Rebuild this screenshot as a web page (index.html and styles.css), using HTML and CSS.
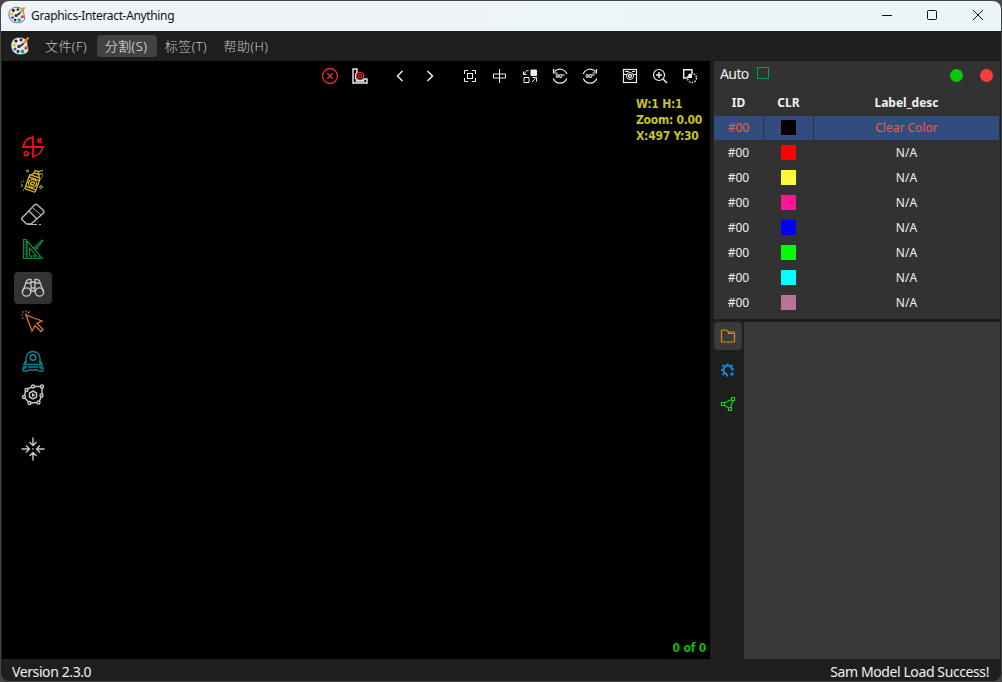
FILE: index.html
```html
<!DOCTYPE html>
<html lang="zh-CN">
<head>
<meta charset="utf-8">
<title>Graphics-Interact-Anything</title>
<link rel="stylesheet" href="styles.css">
</head>
<body>
<svg class="defs" width="0" height="0">
  <symbol id="palette" viewBox="0 0 20 20">
    <path d="M10 1.500C5 1 1 4.500 1 9.500 1 15 5 19 10.500 18.500c3 0 8-1 8-5 0-2-1-3-1-5C18 4 14 1.500 10 1.500z" fill="#e8e8e8" stroke="#444" stroke-width=".8"/>
    <circle cx="6" cy="5" r="1.600" fill="#222"/><circle cx="11" cy="4" r="1.400" fill="#222"/>
    <circle cx="4.500" cy="9" r="1.500" fill="#e4bf27"/><circle cx="5" cy="13" r="1.500" fill="#2b55bd"/>
    <circle cx="9" cy="10.500" r="1.700" fill="#333"/><circle cx="8" cy="15.500" r="1.400" fill="#222"/>
    <circle cx="12.500" cy="15.500" r="1.900" fill="#13a2a0"/><circle cx="16" cy="12" r="1.700" fill="#c7443e"/>
    <path d="M18.500 1.500l-5 6" stroke="#e88a19" stroke-width="2.200"/><path d="M13.500 7.500l-3 2.500" stroke="#333" stroke-width="2"/>
  </symbol>
</svg>
<div class="window">
  <header class="titlebar">
    <svg class="app-icon" width="18" height="18"><use href="#palette"/></svg>
    <span class="title">Graphics-Interact-Anything</span>
    <div class="controls">
      <svg viewBox="0 0 46 30"><path d="M17 14.500h10"/></svg>
      <svg viewBox="0 0 46 30"><rect x="16.500" y="9.500" width="9" height="9" rx="1"/></svg>
      <svg viewBox="0 0 46 30"><path d="M16 9l10 10M26 9L16 19"/></svg>
    </div>
  </header>
  <nav class="menubar">
    <svg class="menu-icon" width="20" height="20"><use href="#palette"/></svg>
    <span class="menu"><b>文件(F)</b></span><span class="menu active"><b>分割(S)</b></span><span class="menu"><b>标签(T)</b></span><span class="menu"><b>帮助(H)</b></span>
  </nav>
  <main class="workspace">
    <section class="canvas">
      <div class="toolbar">
        <svg class="red" viewBox="0 0 20 20"><circle cx="10" cy="10" r="7.500" stroke-width="1.300"/><path stroke-width="1.400" d="M7.300 7.300l5.400 5.400m0-5.400l-5.400 5.400"/></svg>
        <svg viewBox="0 0 20 20"><path stroke-width="1.400" d="M3 3h4v3L5.500 9v3.500L8 14l4 .5L14 13h3v4H3zM5.500 15h9"/><g class="red"><circle cx="10" cy="10" r="3.700" stroke-width="1.300"/><circle cx="10" cy="10" r="1.500" stroke-width="1.200"/><path d="M7 7l1.500 1.500M13 7l-1.500 1.500M7 13l1.500-1.500M13 13l-1.500-1.500"/></g></svg>
        <i class="gap"></i>
        <svg viewBox="0 0 20 20"><path stroke-width="1.500" d="M12.500 5l-5 5 5 5"/></svg>
        <svg viewBox="0 0 20 20"><path stroke-width="1.500" d="M7.500 5l5 5-5 5"/></svg>
        <i class="gap"></i>
        <svg viewBox="0 0 20 20"><path d="M4.500 8V4.500H8M12 4.500h3.500V8M15.500 12v3.500H12M8 15.500H4.500V12"/><rect x="7.500" y="7.500" width="5" height="5"/></svg>
        <svg viewBox="0 0 20 20"><path d="M9.500 3v14M3.500 8h12v4h-12z"/></svg>
        <svg viewBox="0 0 20 20"><path fill="#eee" d="M11 4h5.500v5.500H11z"/><path d="M4 11.500h5v5H4zM8.500 4.500H7L4 8M3.500 5.500v3h3M12 16l3.500-3.500M12.500 11.500h4v4"/></svg>
        <svg viewBox="0 0 20 20"><path stroke-width="1.200" d="M4.500 5.500a7.200 7.200 0 0 1 12.200 2.500M3.300 12.500a7.200 7.200 0 0 0 13.400 0M3.500 3v4h4"/><text x="10" y="12">90°</text></svg>
        <svg viewBox="0 0 20 20"><path stroke-width="1.200" d="M15.500 5.500a7.200 7.200 0 0 0-12.200 2.500M3.300 12.500a7.200 7.200 0 0 0 13.400 0M16.500 3v4h-4"/><text x="10" y="12">90°</text></svg>
        <i class="gap"></i>
        <svg viewBox="0 0 20 20"><rect x="3.500" y="3.500" width="13" height="13" stroke-width="1.200"/><path d="M5 5.500h4M12 5.500h3M4 8.500h3M13 8.500h3"/><circle cx="10" cy="10" r="3.500"/><circle cx="10" cy="10" r="1.500" stroke-width="1.300"/></svg>
        <svg viewBox="0 0 20 20"><circle cx="9" cy="9" r="5.500" stroke-width="1.200"/><path d="M13 13l4 4M9 6v6M6 9h6" stroke-width="1.500"/></svg>
        <svg viewBox="0 0 20 20"><path d="M7.500 12H3.700V3.700H12v3.500" stroke-width="1.400"/><path fill="#eee" stroke="none" d="M7.500 12Q7.500 8 12 7.500V12z"/><circle cx="12" cy="12" r="4.500" stroke-width="1.400" stroke-dasharray="1.600 1.200"/></svg>
      </div>
      <div class="canvas-body">
        <aside class="tools">
          <button class="t-red"><svg viewBox="0 0 24 24"><path stroke-width="1.800" d="M12 1v22M1 12h22M2.500 12C3 6 7 3 12 2.700M12 21.300c5-.5 9-4 9.500-9.300"/><path stroke-width="1.800" d="M16.500 3.500l4 4m0-4l-4 4"/><circle cx="5.300" cy="18.700" r="2" stroke-width="1.700"/></svg></button>
          <button class="t-yellow"><svg viewBox="0 0 24 24"><g transform="rotate(20 12 13)"><rect x="6.500" y="7" width="11" height="15" rx="1" stroke-width="1.300"/><path stroke-width="1.300" d="M6.500 9.500h11M6.500 19.500h11M8 7l2-3h5l1.500 3M10 4V1.500h4V4"/><circle cx="12" cy="14.500" r="4" stroke-width="1.300"/><circle cx="12" cy="14.500" r="1.700" stroke-width="1.400"/></g><circle cx="6.500" cy="2" r="1"/><circle cx="20" cy="18" r="1.300"/><circle cx="0.500" cy="16.500" r="1"/><path d="M2 12h1M2 21h1M0 13h1M17 2.500l5-1M18 5h4M20 9h1M21 7h1"/></svg></button>
          <button class="t-eraser"><svg viewBox="0 0 24 24"><path stroke-width="1.400" d="M.5 15.500L13.500 2Q15 .5 16.500 2l6 5.500q1 1.500 0 2.500L10 21H5.500L.5 16zM8 8l8 8"/><path d="M12 5l8 7M7 21.500h9M18 21.500h2"/></svg></button>
          <button class="t-green"><svg viewBox="0 0 24 24"><path stroke-width="1.200" d="M2.500 2.500h3v19h-3zM2.500 5h2M2.500 8h2M2.500 11h2M2.500 14h2M2.500 17h2M6 4l15.500 17.500H6zM8.500 11v8h7zM12 12l9-9 1 1-8 9M15 10l2 2M10 21v-2M14 21v-2M18 21v-2"/></svg></button>
          <button class="selected spaced"><svg viewBox="0 0 24 24"><path stroke-width="1.300" d="M1.500 16L5 6.500q.5-3.500 5-3V7M22.500 16L19 6.500q-.5-3.500-5-3V7M10 6h4v9h-4zM5 7h5M14 7h5M10 12h4"/><circle cx="5.500" cy="16" r="4.200" stroke-width="1.300"/><circle cx="18.500" cy="16" r="4.200" stroke-width="1.300"/></svg></button>
          <button class="t-orange"><svg viewBox="0 0 24 24"><path stroke-width="1.300" d="M5 5l16 6-5 2.500 6 6-2 2-6-6-3 5.500z"/><path stroke-width="1.200" d="M5 .5V2M.5 5H2M8.500 1.500L7 3M1.500 8.500l1-1M1.500 1.500l1 1M5 3.500V5"/></svg></button>
          <button class="spaced t-teal"><svg viewBox="0 0 24 24"><path d="M5 19V9.500a7 7 0 0 1 14 0V19M5 12l-2 3v4M19 12l2 3v4M6 15.500h12M2 22v-3h3M22 22v-3h-3M7 18h10M2 22h5M17 22h5M7 21h10" stroke-width="1.400"/><circle cx="12" cy="8.500" r="2.800" stroke-width="1.500"/></svg></button>
          <button><svg viewBox="0 0 24 24"><path stroke-width="1.400" d="M12 3.500h9v9l-3.500 7-9 .5L3 14l2-7.500z"/><g fill="#000" stroke-width="1.400"><circle cx="12" cy="3.500" r="1.500"/><circle cx="21" cy="3.500" r="1.500"/><circle cx="20.500" cy="12.500" r="1.500"/><circle cx="17.500" cy="19.500" r="1.500"/><circle cx="8.500" cy="20" r="1.500"/><circle cx="3" cy="14" r="1.500"/><circle cx="5.500" cy="7" r="1.500"/></g><path stroke-width="1.500" d="M12 8l3.500 2v4L12 16l-3.500-2v-4z"/><path fill="#c8c8c8" d="M11.500 10.500l2 1.500-2 1.500z"/></svg></button>
          <button class="last"><svg viewBox="0 0 24 24"><path stroke-width="1.400" d="M12 .5V8M8.500 5l3.500 3.500L15.500 5M12 23.500V16M8.500 19l3.500-3.500 3.500 3.500M.5 12H8M5 8.500L8.500 12 5 15.500M23.500 12H16M19 8.500L15.500 12l3.500 3.500M11.300 12h1.400"/></svg></button>
        </aside>
        <div class="info"><div>W:1 H:1</div><div>Zoom: 0.00</div><div>X:497 Y:30</div></div>
        <div class="counter">0 of 0</div>
      </div>
    </section>
    <section class="side">
      <div class="labels">
        <div class="label-head"><span class="auto">Auto</span><i class="check"></i><i class="dot green"></i><i class="dot reddot"></i></div>
        <div class="row head"><span>ID</span><span>CLR</span><span>Label_desc</span></div>
        <div class="row current"><span>#00</span><span><i class="swatch black"></i></span><span>Clear Color</span></div>
        <div class="row"><span>#00</span><span><i class="swatch c-red"></i></span><span>N/A</span></div>
        <div class="row"><span>#00</span><span><i class="swatch c-yellow"></i></span><span>N/A</span></div>
        <div class="row"><span>#00</span><span><i class="swatch c-pink"></i></span><span>N/A</span></div>
        <div class="row"><span>#00</span><span><i class="swatch c-blue"></i></span><span>N/A</span></div>
        <div class="row"><span>#00</span><span><i class="swatch c-green"></i></span><span>N/A</span></div>
        <div class="row"><span>#00</span><span><i class="swatch c-cyan"></i></span><span>N/A</span></div>
        <div class="row"><span>#00</span><span><i class="swatch c-mauve"></i></span><span>N/A</span></div>
      </div>
      <div class="details">
        <div class="tabs">
          <span class="tab open"><svg viewBox="0 0 16 16"><path stroke="#d8940f" stroke-width="1.200" d="M2.500 2h4l2 2h5q1 0 1 1v8q0 1-1 1h-11q-1 0-1-1V3q0-1 1-1zM8.500 4v1.500h5"/></svg></span>
          <span class="tab"><svg viewBox="0 0 16 16"><path stroke="#1684c7" stroke-width="2.200" d="M7 12A4.200 4.200 0 1 1 12 8"/><path stroke="#1684c7" stroke-width="2.200" d="M7.500 3.500v-2M11 4.500L12.500 3M4 4.500L2.500 3M3 8H1M4 11.500L2.500 13M7 12v2.500M12 7.500h2"/><circle cx="12" cy="12" r="1.700" fill="#1684c7" stroke="none"/></svg></span>
          <span class="tab"><svg viewBox="0 0 16 16"><path stroke="#19cf21" stroke-width="1.200" d="M4.500 7l7-3.500M4.500 9.500l4 2.500M13 4.500l-2.500 7M1.500 6.500h3v3h-3zM11.500 1.500h3v3h-3zM8.500 11.500h3v3h-3z"/></svg></span>
        </div>
        <div class="content"></div>
      </div>
    </section>
  </main>
  <footer class="status"><span class="version">Version 2.3.0</span><span class="message">Sam Model Load Success!</span></footer>
</div>
</body>
</html>
```
FILE: styles.css
```css
* { box-sizing: border-box; }
body { margin: 0; padding: 1px; width: 1002px; height: 682px; overflow: hidden; background: #49464a; font: 13px "Noto Sans", "Noto Sans CJK SC", sans-serif; color: #f0f0f0; }
.defs { display: block; height: 0; }
svg { fill: none; stroke: currentColor; }
.window { display: flex; flex-direction: column; height: 680px; background: #1e1e1e; border-radius: 8px; overflow: hidden; }
.titlebar { height: 30px; flex: none; display: flex; align-items: center; padding: 0 0 2px 7px; background: linear-gradient(90deg, #eef4f9, #eaf5f8); color: #111; }
.app-icon { margin-right: 5px; stroke: none; }
.title { font-size: 12px; letter-spacing: -.35px; white-space: nowrap; }
.controls { margin-left: auto; margin-right: -2px; display: flex; }
.controls svg { width: 46px; height: 30px; stroke: #111; margin-top: 2px; }
.menubar { height: 30px; flex: none; display: flex; align-items: center; padding-left: 9px; color: #c6c6c6; }
.menu-icon { margin-right: 7px; stroke: none; }
.menu { width: 60px; height: 22px; line-height: 21px; text-align: center; border-radius: 4px; white-space: nowrap; }
.menu b { display: block; margin-left: -2px; padding-top: 1px; font-weight: 300; letter-spacing: .45px; }
.menu.active { background: #424242; color: #f0f0f0; }
.workspace { height: 598px; flex: none; display: flex; padding: 0 1px; gap: 4px; }
.canvas { width: 708px; background: #000; display: flex; flex-direction: column; }
.toolbar { height: 30px; display: flex; justify-content: flex-end; align-items: center; padding-right: 5px; color: #eee; }
.toolbar > svg { width: 30px; height: 20px; }
.gap { width: 10px; }
.red { color: #e52f35; stroke: #e52f35; }
.toolbar text { font: bold 6px "Noto Sans", sans-serif; fill: #eee; stroke: none; text-anchor: middle; letter-spacing: -.2px; }
.canvas-body { flex: 1; display: grid; grid-template: 1fr 23px / 60px 1fr; }
.tools { grid-row: 1 / 3; padding: 40px 0 0 12px; display: flex; flex-direction: column; gap: 2px; }
.tools button { width: 38px; height: 32px; display: flex; align-items: center; justify-content: center; padding: 0; border: 0; border-radius: 4px; background: none; color: #c8c8c8; }
.tools button svg { width: 24px; height: 24px; }
.tools .t-red { color: #f30c0c; }
.tools .t-yellow { color: #dcb82d; }
.tools .t-eraser { color: #b8b8b8; }
.tools .t-green { color: #118640; }
.tools .t-orange { color: #d57a31; }
.tools .t-teal { color: #08859c; }
.tools .selected { background: #333; }
.tools .spaced { margin-top: 5px; }
.tools .last { margin-top: 20px; }
.info { justify-self: end; width: 74px; margin-top: 5px; color: #c9c328; font: bold 12px/16px "DejaVu Sans Condensed", "DejaVu Sans", sans-serif; letter-spacing: -.25px; white-space: nowrap; }
.counter { justify-self: end; padding-right: 4px; color: #0bbd0b; font: bold 12px/24px "DejaVu Sans Condensed", "DejaVu Sans", sans-serif; letter-spacing: -.2px; }
.side { width: 286px; display: flex; flex-direction: column; gap: 3px; }
.labels { height: 258px; background: #323232; flex: none; }
.label-head { height: 29px; display: flex; align-items: center; padding: 0 7px 2px 6px; }
.auto { font-size: 14px; width: 37px; letter-spacing: -.6px; line-height: 20px; margin-top: -2px; }
.check { width: 12px; height: 12px; border: 1px solid #0aa047; margin-top: -3px; }
.dot { width: 13px; height: 13px; border-radius: 50%; margin-top: 2px; }
.green { margin-left: auto; background: #0ac70a; }
.reddot { background: #ff3c3c; margin-left: 17px; }
.row { height: 25px; display: grid; grid-template-columns: 49px 49px 185px; column-gap: 1px; line-height: 24px; text-align: center; font-size: 12px; width: 285px; padding-bottom: 1px; }
.row span { display: flex; align-items: center; justify-content: center; height: 24px; }
.head { font-weight: 700; height: 26px; padding-top: 1px; }
.current span { background: #334c80; color: #ee5c3d; }
.swatch { width: 15px; height: 15px; margin-bottom: 1px; }
.black { background: #000; }
.c-red { background: #f00; }
.c-yellow { background: #fff83a; }
.c-pink { background: #ff1493; }
.c-blue { background: #00f; }
.c-green { background: #0f0; }
.c-cyan { background: #0ff; }
.c-mauve { background: #b4779a; }
.details { height: 337px; display: flex; }
.tabs { width: 30px; display: flex; flex-direction: column; gap: 6px; }
.tab { width: 28px; height: 28px; display: flex; align-items: center; justify-content: center; border-radius: 4px; }
.tab.open { background: #3a3a3a; }
.tab svg { width: 16px; height: 16px; }
.content { flex: 1; background: #3a3a3a; }
.status { flex: 1; display: flex; justify-content: space-between; align-items: center; padding: 3px 12px 0 11px; font-size: 14px; }
.version, .message { line-height: 18px; letter-spacing: -.4px; white-space: nowrap; }
```
